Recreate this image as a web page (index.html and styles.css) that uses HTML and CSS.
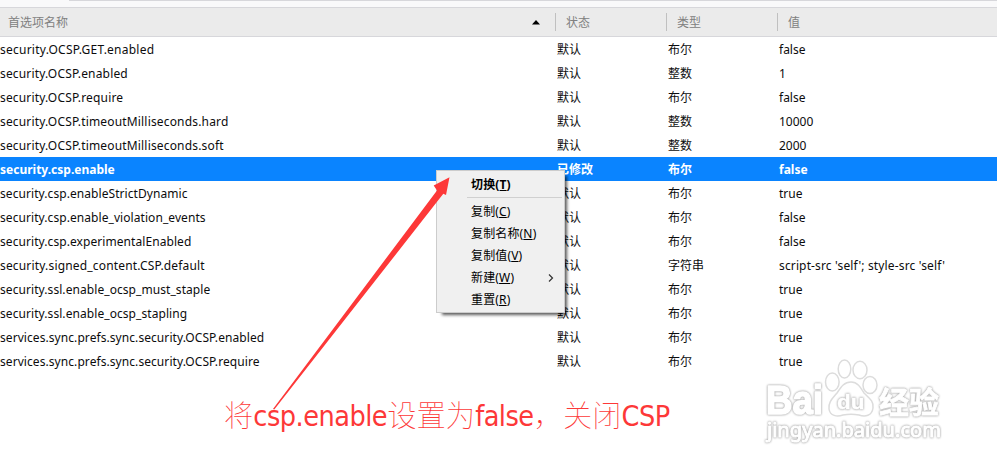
FILE: index.html
```html
<!DOCTYPE html>
<html lang="zh-CN">
<head>
<meta charset="utf-8">
<title>about:config</title>
<link rel="stylesheet" href="styles.css">
</head>
<body>
<div class="toolbar"></div>
<div class="head row">
  <div class="col name">首选项名称<svg class="sort" width="8" height="5" viewBox="0 0 8 5"><path d="M4 0L8 4.5H0Z"/></svg></div>
  <div class="col">状态</div>
  <div class="col">类型</div>
  <div class="col">值</div>
</div>
<main class="list">
  <div class="row"><span class="wider">security.OCSP.GET.enabled</span><span>默认</span><span>布尔</span><span>false</span></div>
  <div class="row"><span class="wide">security.OCSP.enabled</span><span>默认</span><span>整数</span><span>1</span></div>
  <div class="row"><span class="wide">security.OCSP.require</span><span>默认</span><span>布尔</span><span>false</span></div>
  <div class="row"><span class="wide">security.OCSP.timeoutMilliseconds.hard</span><span>默认</span><span>整数</span><span>10000</span></div>
  <div class="row"><span class="wide">security.OCSP.timeoutMilliseconds.soft</span><span>默认</span><span>整数</span><span>2000</span></div>
  <div class="row selected"><span>security.csp.enable</span><span>已修改</span><span>布尔</span><span>false</span></div>
  <div class="row"><span>security.csp.enableStrictDynamic</span><span>默认</span><span>布尔</span><span>true</span></div>
  <div class="row"><span>security.csp.enable_violation_events</span><span>默认</span><span>布尔</span><span>false</span></div>
  <div class="row"><span>security.csp.experimentalEnabled</span><span>默认</span><span>布尔</span><span>false</span></div>
  <div class="row"><span class="wide">security.signed_content.CSP.default</span><span>默认</span><span>字符串</span><span class="source">script-src 'self'; style-src 'self'</span></div>
  <div class="row"><span>security.ssl.enable_ocsp_must_staple</span><span>默认</span><span>布尔</span><span>true</span></div>
  <div class="row"><span>security.ssl.enable_ocsp_stapling</span><span>默认</span><span>布尔</span><span>true</span></div>
  <div class="row"><span>services.sync.prefs.sync.security.OCSP.enabled</span><span>默认</span><span>布尔</span><span>true</span></div>
  <div class="row"><span>services.sync.prefs.sync.security.OCSP.require</span><span>默认</span><span>布尔</span><span>true</span></div>
</main>
<div class="menu">
  <div class="item default">切换(<u>T</u>)</div>
  <div class="separator"></div>
  <div class="item">复制(<u>C</u>)</div>
  <div class="item">复制名称(<u>N</u>)</div>
  <div class="item">复制值(<u>V</u>)</div>
  <div class="item">新建(<u>W</u>)<svg class="chevron" width="6" height="8" viewBox="0 0 6 8"><path d="M1 .5L4.5 4L1 7.5"/></svg></div>
  <div class="item">重置(<u>R</u>)</div>
</div>
<svg class="arrow" width="997" height="466" viewBox="0 0 997 466"><path d="M273 409L437 190.500L433.700 185.500L449.500 177.200L446 195L443.300 193.800L274.300 409.500Z"/></svg>
<p class="note"><span class="han">将</span><span class="latin">csp.enable</span><span class="han">设置为</span><span class="latin">false</span><span class="han">，关闭</span><span class="latin">CSP</span></p>
<svg class="watermark" width="190" height="95" viewBox="0 0 190 95">
  <g class="mark">
    <text class="brand" x="3" y="59" textLength="57" lengthAdjust="spacingAndGlyphs">Bai</text>
    <g class="paw">
      <ellipse cx="69.300" cy="27" rx="6.800" ry="9"/>
      <ellipse cx="81.500" cy="14" rx="6.300" ry="9"/>
      <ellipse cx="97" cy="15" rx="7" ry="8.700"/>
      <ellipse cx="107" cy="30" rx="7" ry="8.500"/>
      <path d="M88 27C95 27 98 33 101 38C106 43 111 46 110 53C109 61 102 62 96 60C91 59 85 59 80 60C74 62 67 61 66 54C65 47 70 43 74 38C78 32 81 27 88 27Z"/>
    </g>
    <text class="du" x="74" y="54" textLength="27.500" lengthAdjust="spacingAndGlyphs">du</text>
    <text class="cn" x="116" y="57.500" textLength="60" lengthAdjust="spacingAndGlyphs">经验</text>
    <text class="url" x="4" y="81.500" textLength="174" lengthAdjust="spacingAndGlyphs">jingyan.baidu.com</text>
  </g>
</svg>
</body>
</html>
```
FILE: styles.css
```css
* { box-sizing: border-box; }
body {
  margin: 0;
  width: 997px;
  height: 466px;
  overflow: hidden;
  position: relative;
  background: #fff;
  color: #0c0c0d;
  font: 12px/24px "Noto Sans", "Noto Sans CJK SC", sans-serif;
}
.toolbar {
  height: 8px;
  background: linear-gradient(#d7d7db, #d7d7db) 69px 0 / 928px 1px no-repeat #f9f9fa;
  border-bottom: 1px solid #d7d7db;
}
.row {
  display: grid;
  grid-template-columns: 557px 111px 111px 1fr;
  height: 24px;
  line-height: 26px;
  white-space: nowrap;
}
.row > span:first-child { letter-spacing: .07px; }
.row > .wide:first-child { letter-spacing: .17px; }
.row > .wider:first-child { letter-spacing: .24px; }
.source { letter-spacing: .14px; }
.head {
  grid-template-columns: 555px 111px 111px 1fr;
  height: 29px;
  align-items: center;
  background: #ebebeb;
  border-bottom: 1px solid #d7d7db;
  color: #808080;
}
.col {
  height: 18px;
  line-height: 20px;
  padding-left: 10px;
  border-left: 1px solid #c0c0c0;
}
.name {
  display: flex;
  align-items: center;
  justify-content: space-between;
  line-height: 18px;
  padding: 1px 15px 0 8px;
  border: 0;
}
.sort { fill: #000; }
.selected {
  background: #0a84ff;
  color: #fff;
  font-weight: 700;
}
.row.selected > span:first-child { letter-spacing: 0; }
.menu {
  position: absolute;
  left: 436px;
  top: 170px;
  width: 129px;
  height: 143px;
  padding: 3px 2px;
  background: #f0f0f0;
  border: 1px solid #ccc;
  box-shadow: 4px 4px 3px -2px rgba(0, 0, 0, .65);
  color: #000;
}
.item {
  display: flex;
  align-items: center;
  height: 22px;
  line-height: 22px;
  padding-left: 32px;
  letter-spacing: .15px;
}
.item u { text-underline-offset: 1px; }
.default { font-weight: 700; }
.separator {
  height: 1px;
  margin: 1px 0 3px 28px;
  background: #d0d0d0;
}
.chevron {
  margin: 0 8px 0 auto;
  fill: none;
  stroke: #333;
  stroke-width: 1.2;
}
.arrow {
  position: absolute;
  left: 0;
  top: 0;
  fill: #fd3838;
}
.note {
  position: absolute;
  left: 224px;
  top: 393px;
  margin: 0;
  color: #fd3838;
  font-size: 29.33px;
  line-height: 40px;
  white-space: nowrap;
}
.han { font-family: "Noto Sans CJK SC", sans-serif; font-weight: 100; }
.latin {
  font-family: "DejaVu Sans Condensed", "DejaVu Sans", sans-serif;
  font-stretch: condensed;
  font-size: 28.5px;
  letter-spacing: -.5px;
}
.watermark {
  position: absolute;
  left: 763px;
  top: 355px;
}
.mark {
  fill: #fff;
  stroke: #fff;
  stroke-width: 1.6;
  stroke-linejoin: round;
}
.mark text { filter: drop-shadow(0 0 .8px #aaa) drop-shadow(0 0 .4px #ccc); }
.paw { stroke: #dcdcdc; stroke-width: 1.5; }
.brand { font: 700 40px "Liberation Sans", sans-serif; }
.mark .du { font: 700 20px "Liberation Sans", sans-serif; stroke-width: .4; }
.mark .cn { font: 700 30px "Noto Sans CJK SC", sans-serif; stroke-width: .8; }
.mark .url { font: 20px "Noto Sans", sans-serif; stroke-width: 1; }
```
